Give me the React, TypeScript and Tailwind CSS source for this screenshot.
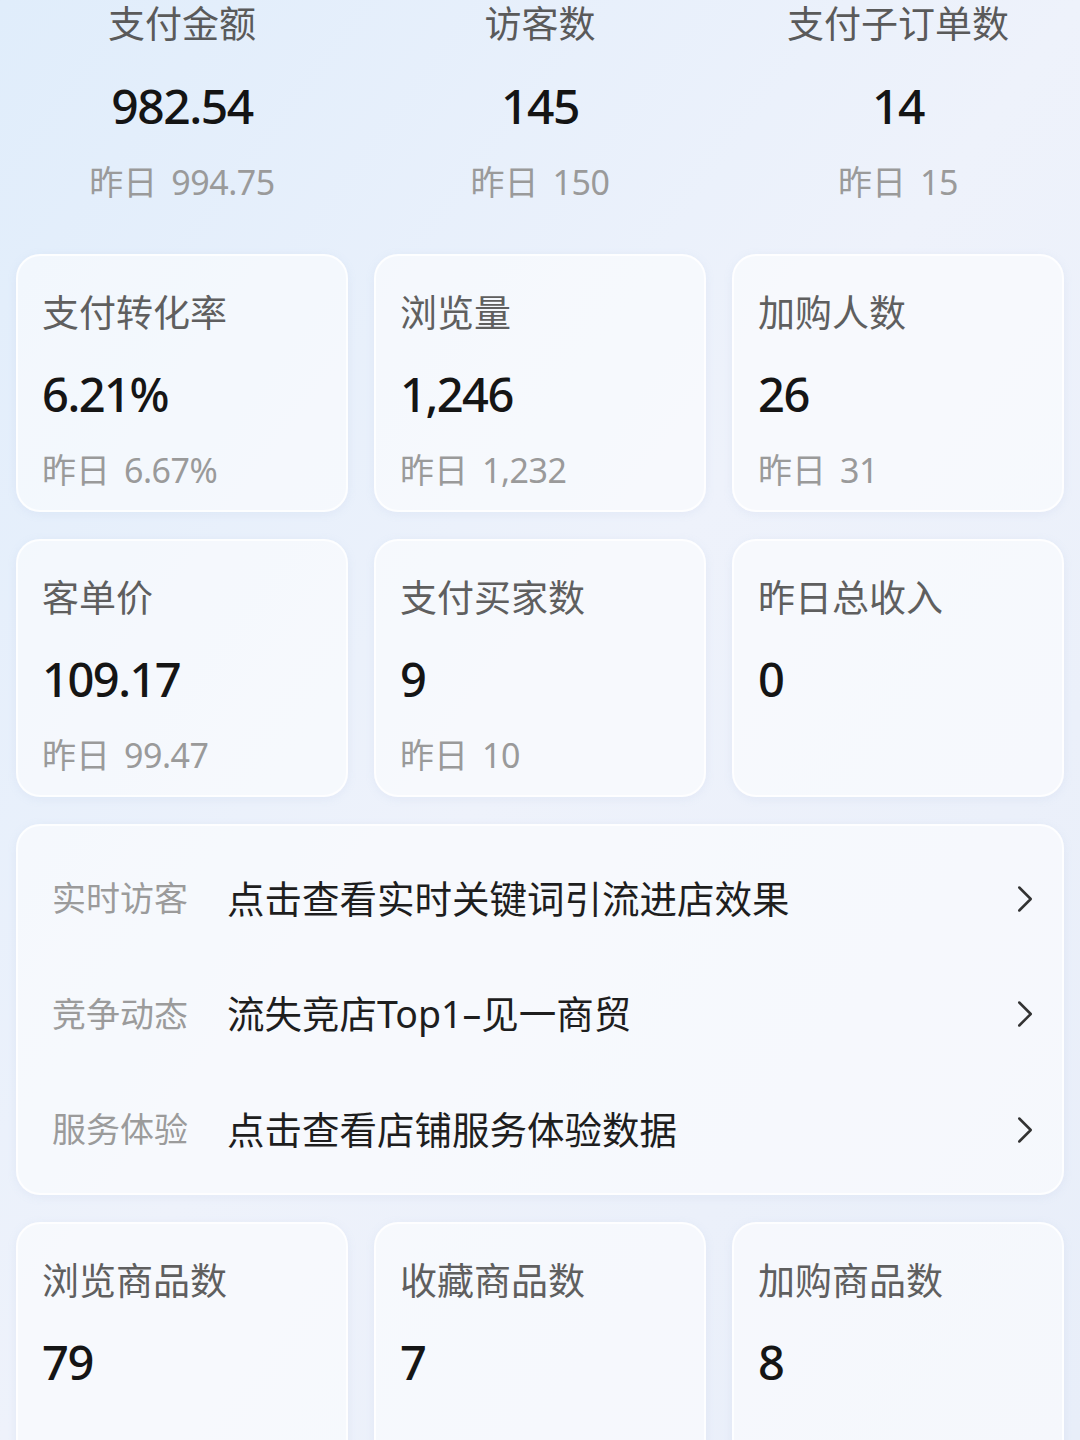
import { ChevronRight } from 'lucide-react';

const font = "font-['Noto_Sans','Noto_Sans_CJK_SC',sans-serif]";

type Metric = { label: string; value: string; prev?: string };

const topMetrics: Metric[] = [
  { label: '支付金额', value: '982.54', prev: '994.75' },
  { label: '访客数', value: '145', prev: '150' },
  { label: '支付子订单数', value: '14', prev: '15' },
];

const cardRows: Metric[][] = [
  [
    { label: '支付转化率', value: '6.21%', prev: '6.67%' },
    { label: '浏览量', value: '1,246', prev: '1,232' },
    { label: '加购人数', value: '26', prev: '31' },
  ],
  [
    { label: '客单价', value: '109.17', prev: '99.47' },
    { label: '支付买家数', value: '9', prev: '10' },
    { label: '昨日总收入', value: '0' },
  ],
];

const goodsMetrics: Metric[] = [
  { label: '浏览商品数', value: '79' },
  { label: '收藏商品数', value: '7' },
  { label: '加购商品数', value: '8' },
];

const links = [
  { label: '实时访客', text: '点击查看实时关键词引流进店效果' },
  { label: '竞争动态', text: '流失竞店Top1–见一商贸' },
  { label: '服务体验', text: '点击查看店铺服务体验数据' },
];

function Prev({ value }: { value: string }) {
  return (
    <div className="mt-[24px] h-[44px] leading-[44px] text-[34px] text-[#9a9a9a] whitespace-nowrap">
      昨日<span className="ml-[14px] tracking-[-0.5px]">{value}</span>
    </div>
  );
}

function Card({ m }: { m: Metric }) {
  return (
    <div className="h-[258px] rounded-[24px] border-2 border-white/80 bg-white/55 shadow-[0_2px_10px_rgba(150,170,210,0.12)] pl-[24px] pt-[33px]">
      <div className="h-[48px] leading-[48px] text-[37px] text-[#5f5f5f] whitespace-nowrap">{m.label}</div>
      <div className="mt-[27px] h-[60px] leading-[60px] text-[47px] font-medium text-[#151515] tracking-[-1.5px]">
        {m.value}
      </div>
      {m.prev && <Prev value={m.prev} />}
    </div>
  );
}

export default function App() {
  return (
    <div
      className={`${font} w-[1080px] h-[1440px] overflow-hidden bg-gradient-to-br from-[#e0edfb] via-[#eef2fb] to-[#e8eef9]`}
    >
      <div className="px-4">
        {/* headline numbers */}
        <div className="grid grid-cols-3 gap-x-[26px] text-center pt-[4px]">
          {topMetrics.map((m) => (
            <div key={m.label} className="flex flex-col items-center">
              <div className="h-[40px] leading-[40px] text-[37px] text-[#5a5a5a]">{m.label}</div>
              <div className="mt-[32px] h-[60px] leading-[60px] text-[48px] font-medium text-[#141414] tracking-[-1.5px]">
                {m.value}
              </div>
              {m.prev && <Prev value={m.prev} />}
            </div>
          ))}
        </div>

        <div className="mt-[50px] flex flex-col gap-[27px]">
          {cardRows.map((row, i) => (
            <div key={i} className="grid grid-cols-3 gap-x-[26px]">
              {row.map((m) => (
                <Card key={m.label} m={m} />
              ))}
            </div>
          ))}

          <div className="rounded-[24px] border-2 border-white/80 bg-white/55 shadow-[0_2px_10px_rgba(150,170,210,0.12)] pt-[15px] pb-[5px]">
            {links.map((l) => (
              <div key={l.label} className="h-[115.5px] flex items-center pl-[34px] pr-[14px]">
                <span className="w-[175px] shrink-0 text-[34px] text-[#9b9b9b] whitespace-nowrap">{l.label}</span>
                <span className="flex-1 text-[37.5px] text-[#1e1e1e] whitespace-nowrap">{l.text}</span>
                <ChevronRight size={46} strokeWidth={1.3} className="text-[#333]" />
              </div>
            ))}
          </div>

          <div className="grid grid-cols-3 gap-x-[26px]">
            {goodsMetrics.map((m) => (
              <Card key={m.label} m={m} />
            ))}
          </div>
        </div>
      </div>
    </div>
  );
}
